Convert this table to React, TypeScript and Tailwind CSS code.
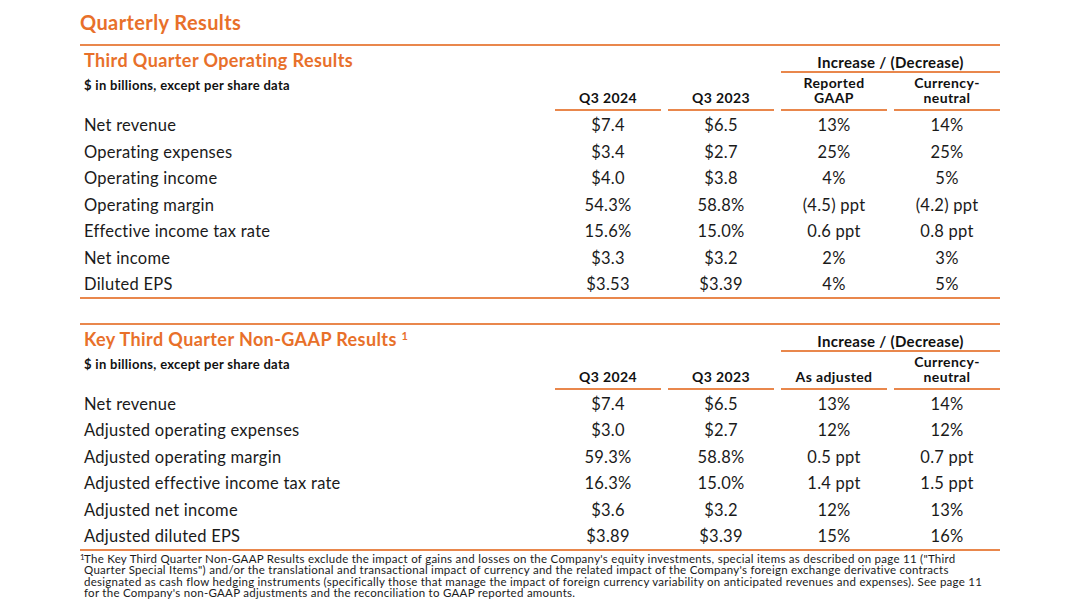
const orange = 'text-[#e8702a]';

type Row = [string, string, string, string, string];

const operating: Row[] = [
  ['Net revenue', '$7.4', '$6.5', '13%', '14%'],
  ['Operating expenses', '$3.4', '$2.7', '25%', '25%'],
  ['Operating income', '$4.0', '$3.8', '4%', '5%'],
  ['Operating margin', '54.3%', '58.8%', '(4.5) ppt', '(4.2) ppt'],
  ['Effective income tax rate', '15.6%', '15.0%', '0.6 ppt', '0.8 ppt'],
  ['Net income', '$3.3', '$3.2', '2%', '3%'],
  ['Diluted EPS', '$3.53', '$3.39', '4%', '5%'],
];

const nonGaap: Row[] = [
  ['Net revenue', '$7.4', '$6.5', '13%', '14%'],
  ['Adjusted operating expenses', '$3.0', '$2.7', '12%', '12%'],
  ['Adjusted operating margin', '59.3%', '58.8%', '0.5 ppt', '0.7 ppt'],
  ['Adjusted effective income tax rate', '16.3%', '15.0%', '1.4 ppt', '1.5 ppt'],
  ['Adjusted net income', '$3.6', '$3.2', '12%', '13%'],
  ['Adjusted diluted EPS', '$3.89', '$3.39', '15%', '16%'],
];

const ResultsTable = ({
  title,
  thirdCol,
  rows,
}: {
  title: React.ReactNode;
  thirdCol: React.ReactNode;
  rows: Row[];
}) => {
  return (
    <div className="border-t-2 border-[#e9874c]">
      {/* header */}
      <div className="flex">
        <div className="w-[468px] pl-1 pt-[3px]">
          <h2 className={`text-[18px] font-bold leading-[22px] tracking-[0.4px] ${orange}`}>{title}</h2>
          <div className="mt-[6px] text-[13px] font-bold leading-4 tracking-[0.3px] text-[#111]">
            $ in billions, except per share data
          </div>
        </div>
        <div className="ml-[7px] flex w-[445px] flex-col pt-[7px]">
          <div className="flex justify-end">
            <div className="w-[219px] border-b-2 border-[#e9874c] text-center text-[15px] font-bold leading-[18px] tracking-[0.3px] text-[#111]">
              Increase / (Decrease)
            </div>
          </div>
          <div className="mt-[2px] flex items-end gap-[7px] text-[14px] font-bold leading-[15px] tracking-[0.4px] text-[#111]">
            <div className="w-[106px] border-b-2 border-[#e9874c] pb-1 text-center">Q3 2024</div>
            <div className="w-[106px] border-b-2 border-[#e9874c] pb-1 text-center">Q3 2023</div>
            <div className="w-[106px] border-b-2 border-[#e9874c] pb-1 text-center">{thirdCol}</div>
            <div className="w-[106px] border-b-2 border-[#e9874c] pb-1 text-center">
              Currency-
              <br />
              neutral
            </div>
          </div>
        </div>
      </div>
      {/* body */}
      <div className="border-b-2 border-[#e9874c]">
        {rows.map((r) => (
          <div
            key={r[0]}
            className="flex h-[26.5px] items-center pt-[2px] text-[16.5px] leading-5 tracking-[0.25px] text-[#1a1a1a]"
          >
            <div className="w-[468px] pl-1">{r[0]}</div>
            <div className="ml-[7px] flex gap-[7px]">
              {r.slice(1).map((v, i) => (
                <div key={i} className="w-[106px] text-center">
                  {v}
                </div>
              ))}
            </div>
          </div>
        ))}
      </div>
    </div>
  );
};

export default function App() {
  return (
    <div
      className="h-[608px] w-[1080px] overflow-hidden bg-white"
      style={{ fontFamily: 'Lato, "Noto Sans", sans-serif' }}
    >
      <div className="ml-[80px] w-[920px]">
        <h1 className={`pt-[10px] pb-[10px] text-[20px] font-bold leading-[24px] tracking-[0.4px] ${orange}`}>
          Quarterly Results
        </h1>
        <ResultsTable
          title="Third Quarter Operating Results"
          thirdCol={
            <>
              Reported
              <br />
              GAAP
            </>
          }
          rows={operating}
        />
        <div className="h-[24px]" />
        <ResultsTable
          title={
            <>
              Key Third Quarter Non-GAAP Results{' '}
              <sup className="text-[11px]">1</sup>
            </>
          }
          thirdCol="As adjusted"
          rows={nonGaap}
        />
        <div className="mt-[2px] flex text-[11.5px] leading-[11.5px] tracking-[0.27px] text-[#1a1a1a]">
          <span className="w-1 text-[8px] leading-[8px]">1</span>
          <p>
            The Key Third Quarter Non-GAAP Results exclude the impact of gains and losses on the Company's equity
            investments, special items as described on page 11 ("Third
            <br />
            Quarter Special Items") and/or the translational and transactional impact of currency and the related
            impact of the Company's foreign exchange derivative contracts
            <br />
            designated as cash flow hedging instruments (specifically those that manage the impact of foreign
            currency variability on anticipated revenues and expenses). See page 11
            <br />
            for the Company's non-GAAP adjustments and the reconciliation to GAAP reported amounts.
          </p>
        </div>
      </div>
    </div>
  );
}
